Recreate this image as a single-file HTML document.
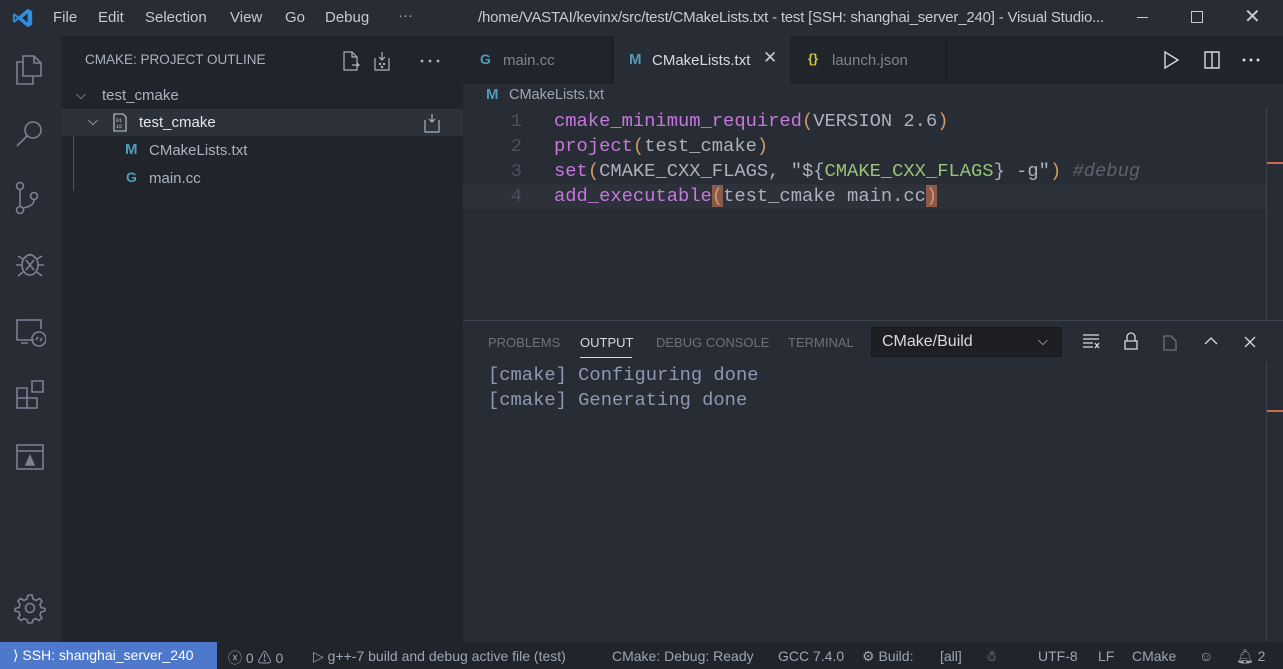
<!DOCTYPE html>
<html><head><meta charset="utf-8"><style>
*{margin:0;padding:0;box-sizing:border-box}
body{width:1283px;height:669px;overflow:hidden;background:#282c34;font-family:"Liberation Sans",sans-serif;color:#abb2bf;position:relative;font-size:14px}
.a{position:absolute;white-space:nowrap}
.mono{font-family:"Liberation Mono",monospace;font-size:18.8px}
.s{position:absolute;top:648px;font-size:14px;color:#9da5b4;white-space:nowrap}
svg{position:absolute}
</style></head><body>
<div class="a" style="left:0;top:0;width:1283px;height:36px;background:#282c34"></div>
<svg style="left:12px;top:7px" width="22" height="22" viewBox="0 0 24 24"><path d="M17 2 L22 4.5 V19.5 L17 22 L7 13.5 L3 17 L1 16 V8 L3 7 L7 10.5 Z M17 7 L11 12 L17 17 Z M3 9.5 V14.5 L5.5 12 Z" fill="#2f8fe0"/></svg>
<div class="a" style="left:53px;top:9px;font-size:15px;color:#c5cad3">File</div>
<div class="a" style="left:98px;top:9px;font-size:15px;color:#c5cad3">Edit</div>
<div class="a" style="left:145px;top:9px;font-size:15px;color:#c5cad3">Selection</div>
<div class="a" style="left:230px;top:9px;font-size:15px;color:#c5cad3">View</div>
<div class="a" style="left:285px;top:9px;font-size:15px;color:#c5cad3">Go</div>
<div class="a" style="left:325px;top:9px;font-size:15px;color:#c5cad3">Debug</div>
<div class="a" style="left:398px;top:7px;font-size:15px;color:#9da5b4">···</div>
<div class="a" style="left:478px;top:9px;font-size:15px;color:#c5cad3;letter-spacing:-0.2px">/home/VASTAI/kevinx/src/test/CMakeLists.txt - test [SSH: shanghai_server_240] - Visual Studio...</div>
<div class="a" style="left:1137px;top:17px;width:11px;height:1px;background:#c5cad3"></div>
<div class="a" style="left:1191px;top:11px;width:12px;height:12px;border:1px solid #c5cad3"></div>
<div class="a" style="left:1244px;top:4px;font-size:20px;color:#c5cad3">✕</div>
<div class="a" style="left:0;top:36px;width:61px;height:606px;background:#282c34"></div>
<svg style="left:14px;top:50px" width="32" height="430" viewBox="0 0 32 430" fill="none" stroke="#7a8295" stroke-width="1.6">
<path d="M9 6 H20 L27 13 V26 H9 Z M20 6 V13 H27"/><path d="M9 12 H3 V34 H19 V26"/>
<circle cx="19" cy="80" r="8"/><path d="M13 86 L3 96"/>
<circle cx="6" cy="136" r="3.5"/><circle cx="6" cy="160" r="3.5"/><circle cx="20" cy="146" r="3.5"/><path d="M6 140 V156 M20 150 Q20 156 9 158"/>
<ellipse cx="16" cy="215" rx="8" ry="10"/><path d="M11 208 Q16 201 21 208 M12 210 L20 220 M20 210 L12 220 M2 215 H8 M24 215 H30 M4 206 L9 209 M28 206 L23 209 M4 226 L9 222 M28 226 L23 222"/>
<path d="M20 290 H3 V270 H27 V279 M7 293 H14"/><circle cx="25" cy="289" r="7"/><path d="M22 290 L24 287 M26 291 L28 288"/>
<path d="M3 338 H13 V358 H3 Z M3 348 H23 V358 H13 M13 338 V348 M18 331 H29 V342 H18 Z"/>
<path d="M3 419 V395 H29 V419 Z M3 401 H29"/><path d="M12 415 L16 406 L20 415 Z" fill="#7a8295"/>
</svg>
<svg style="left:14px;top:592px" width="32" height="32" viewBox="0 0 32 32" fill="none" stroke="#7a8295" stroke-width="1.6"><circle cx="16" cy="16" r="4.5"/><path d="M14 3 H18 L19 7 L22 8.5 L25.5 6.5 L28 9 L26 12.5 L27 15.5 L31 16.5 V19 M14 3 L13 7 L10 8.5 L6.5 6.5 L4 9 L6 12.5 L5 15.5 L1 16.5 V19 L5 20 L6 23 L4 26 L7 28.5 L10 26.5 L13 28 L14 31 H18 L19 28 L22 26.5 L25 28.5 L28 26 L26 23 L27 20 L31 19"/></svg>
<div class="a" style="left:61px;top:36px;width:402px;height:606px;background:#21252b"></div>
<div class="a" style="left:85px;top:52px;font-size:13.5px;color:#abb2bf">CMAKE: PROJECT OUTLINE</div>
<svg style="left:342px;top:50px" width="100" height="22" viewBox="0 0 100 22" fill="none" stroke="#abb2bf" stroke-width="1.2"><path d="M2 2 H10 L15 7 V20 H2 Z M10 2 V7 H15 M10 15 H17 M15 13 L17 15 L15 17"/><path d="M40 2 V10 M37 7 L40 10 L43 7 M33 8 V20 H47 V8"/><circle cx="38" cy="14" r=".6"/><circle cx="42" cy="14" r=".6"/><circle cx="40" cy="17" r=".6"/><circle cx="80" cy="11" r=".8" fill="#abb2bf"/><circle cx="88" cy="11" r=".8" fill="#abb2bf"/><circle cx="96" cy="11" r=".8" fill="#abb2bf"/></svg>
<div class="a" style="left:76px;top:87px;font-size:13px;color:#abb2bf">⌵</div>
<div class="a" style="left:102px;top:87px;font-size:15px;color:#abb2bf">test_cmake</div>
<div class="a" style="left:61px;top:109px;width:402px;height:27px;background:#2c313a"></div>
<div class="a" style="left:88px;top:113px;font-size:13px;color:#d7dae0">⌵</div>
<svg style="left:112px;top:113px" width="16" height="19" viewBox="0 0 16 19" fill="none" stroke="#c5cad3" stroke-width="1.1"><path d="M2 1 H11 L14 4 V18 H2 Z"/><text x="4" y="9" font-size="5" fill="#c5cad3" stroke="none" font-family="Liberation Mono">01</text><text x="4" y="15" font-size="5" fill="#c5cad3" stroke="none" font-family="Liberation Mono">10</text></svg>
<div class="a" style="left:139px;top:114px;font-size:15px;color:#e6e6e6">test_cmake</div>
<svg style="left:423px;top:113px" width="18" height="22" viewBox="0 0 18 22" fill="none" stroke="#abb2bf" stroke-width="1.2"><path d="M9 1 V9 M6 6 L9 9 L12 6 M2 7 V19 H16 V7"/></svg>
<div class="a" style="left:73px;top:136px;width:1px;height:55px;background:#4b5263"></div>
<div class="a" style="left:125px;top:141px;font-size:15px;font-weight:bold;color:#519aba">M</div>
<div class="a" style="left:149px;top:142px;font-size:15px;color:#abb2bf">CMakeLists.txt</div>
<div class="a" style="left:126px;top:169px;font-size:14px;font-weight:bold;color:#519aba">G</div>
<div class="a" style="left:149px;top:170px;font-size:15px;color:#abb2bf">main.cc</div>
<div class="a" style="left:463px;top:36px;width:820px;height:48px;background:#21252b"></div>
<div class="a" style="left:463px;top:36px;width:150px;height:48px;border-right:1px solid #181a1f"></div>
<div class="a" style="left:480px;top:51px;font-size:14px;font-weight:bold;color:#519aba">G</div>
<div class="a" style="left:503px;top:52px;font-size:15px;color:#7f848e">main.cc</div>
<div class="a" style="left:614px;top:36px;width:176px;height:48px;background:#282c34"></div>
<div class="a" style="left:629px;top:51px;font-size:15px;font-weight:bold;color:#519aba">M</div>
<div class="a" style="left:652px;top:52px;font-size:15px;color:#d7dae0">CMakeLists.txt</div>
<div class="a" style="left:763px;top:48px;font-size:17px;color:#c5cad3">✕</div>
<div class="a" style="left:790px;top:36px;width:157px;height:48px;border-right:1px solid #181a1f"></div>
<div class="a" style="left:808px;top:51px;font-size:13px;font-weight:bold;color:#cbcb41">{}</div>
<div class="a" style="left:832px;top:52px;font-size:15px;color:#7f848e">launch.json</div>
<svg style="left:1160px;top:49px" width="110" height="22" viewBox="0 0 110 22" fill="none" stroke="#d7dae0" stroke-width="1.4"><path d="M5 3 L18 11 L5 19 Z"/><path d="M45 3 H59 V19 H45 Z M52 3 V19"/><circle cx="84" cy="11" r=".8" fill="#d7dae0"/><circle cx="91" cy="11" r=".8" fill="#d7dae0"/><circle cx="98" cy="11" r=".8" fill="#d7dae0"/></svg>
<div class="a" style="left:486px;top:86px;font-size:15px;font-weight:bold;color:#519aba">M</div>
<div class="a" style="left:509px;top:87px;font-size:14.5px;color:#9da5b4">CMakeLists.txt</div>
<div class="a" style="left:463px;top:184px;width:804px;height:25px;background:#2c313a"></div>
<div class="a" style="left:1266px;top:108px;width:1px;height:212px;background:#3e4451"></div>
<div class="a" style="left:1267px;top:162px;width:16px;height:2px;background:#c86a4d"></div>
<div class="a mono" style="left:500px;top:109px;line-height:25px;color:#495162;text-align:right;width:22px">1<br>2<br>3<br>4</div>
<div class="a mono" style="left:554px;top:109px;line-height:25px;color:#abb2bf">
<span style="color:#c678dd">cmake_minimum_required</span><span style="color:#d19a66">(</span>VERSION 2.6<span style="color:#d19a66">)</span><br>
<span style="color:#c678dd">project</span><span style="color:#d19a66">(</span>test_cmake<span style="color:#d19a66">)</span><br>
<span style="color:#c678dd">set</span><span style="color:#d19a66">(</span>CMAKE_CXX_FLAGS, "${<span style="color:#98c379">CMAKE_CXX_FLAGS</span>} -g"<span style="color:#d19a66">)</span> <i style="color:#5c6370">#debug</i><br>
<span style="color:#c678dd">add_executable</span><span style="color:#d19a66;background:#8b5a4a">(</span>test_cmake main.cc<span style="color:#d19a66;background:#8b5a4a">)</span></div>
<div class="a" style="left:463px;top:320px;width:820px;height:1px;background:#3e4451"></div>
<div class="a" style="left:488px;top:335px;font-size:13px;color:#6b717d">PROBLEMS</div>
<div class="a" style="left:580px;top:335px;font-size:13px;color:#d7dae0">OUTPUT</div>
<div class="a" style="left:580px;top:357px;width:52px;height:1px;background:#d7dae0"></div>
<div class="a" style="left:656px;top:335px;font-size:13px;color:#6b717d">DEBUG CONSOLE</div>
<div class="a" style="left:788px;top:335px;font-size:13px;color:#6b717d">TERMINAL</div>
<div class="a" style="left:871px;top:327px;width:191px;height:30px;background:#1d1f23;border:1px solid #181a1f"></div>
<div class="a" style="left:882px;top:333px;font-size:16px;color:#d7dae0">CMake/Build</div>
<div class="a" style="left:1038px;top:333px;font-size:13px;color:#d7dae0">⌵</div>
<svg style="left:1080px;top:330px" width="185" height="24" viewBox="0 0 185 24" fill="none" stroke="#d7dae0" stroke-width="1.3"><path d="M3 5 H19 M3 9 H19 M3 13 H13 M3 17 H13 M15 13 L19 18 M19 13 L15 18"/><path d="M45 11 V19 H57 V11 Z M47 11 V7 A4 4 0 0 1 55 7 V11"/><path d="M84 6 H91 L96 11 V20 H84 Z" stroke="#6b717d"/><path d="M125 14 L131 8 L137 14"/><path d="M165 7 L175 17 M175 7 L165 17"/></svg>
<div class="a mono" style="left:488px;top:363px;line-height:25px;color:#8d9ab3">[cmake] Configuring done<br>[cmake] Generating done</div>
<div class="a" style="left:1266px;top:362px;width:1px;height:280px;background:#3e4451"></div>
<div class="a" style="left:1267px;top:410px;width:16px;height:2px;background:#c86a4d"></div>
<div class="a" style="left:0;top:642px;width:1283px;height:27px;background:#21252b"></div>
<div class="a" style="left:0;top:642px;width:217px;height:27px;background:#4d78cc"></div>
<div class="a" style="left:13px;top:647px;font-size:14px;color:#fff">⟩ SSH: shanghai_server_240</div>
<div class="s" style="left:228px">ⓧ 0 ⚠ 0</div>
<div class="s" style="left:313px">▷ g++-7 build and debug active file (test)</div>
<div class="s" style="left:612px">CMake: Debug: Ready</div>
<div class="s" style="left:778px">GCC 7.4.0</div>
<div class="s" style="left:862px">⚙ Build:</div>
<div class="s" style="left:940px">[all]</div>
<div class="s" style="left:985px">☃</div>
<div class="s" style="left:1038px">UTF-8</div>
<div class="s" style="left:1098px">LF</div>
<div class="s" style="left:1132px">CMake</div>
<div class="s" style="left:1199px">☺</div>
<div class="s" style="left:1236px">🔔︎ 2</div>
</body></html>
